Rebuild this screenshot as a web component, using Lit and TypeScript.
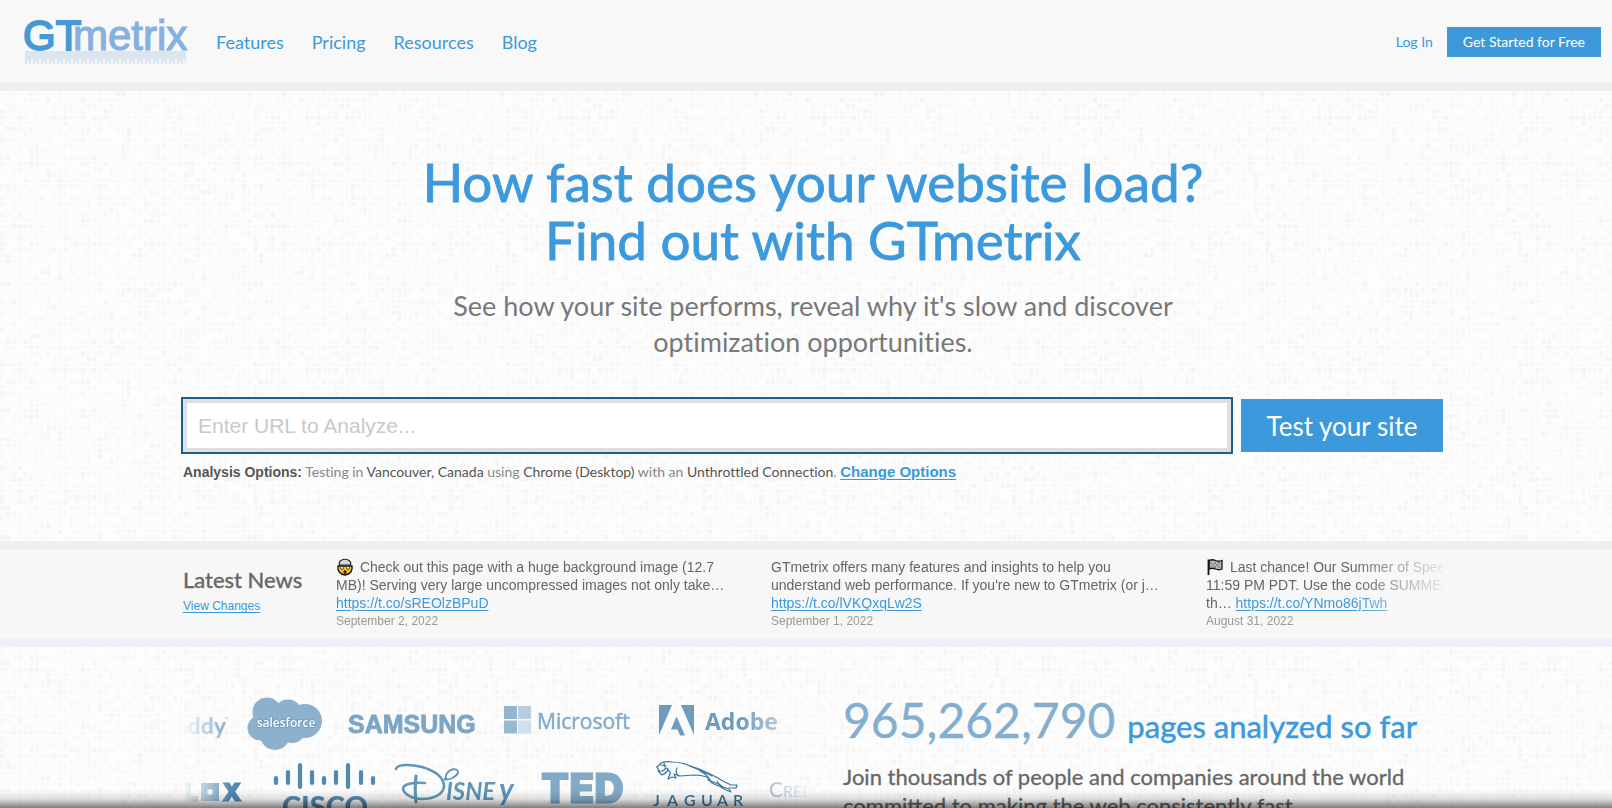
import { LitElement, html, svg, css } from "lit";
import { customElement } from "lit/decorators.js";

const CELLS = 44;
const PITCH = 5.75;

/** Mosaic tiles, one path per shade of grey. */
function mosaicPaths(): string[] {
  let seed = 20220902;
  const next = () => {
    seed = (seed * 1103515245 + 12345) & 0x7fffffff;
    return seed / 0x7fffffff;
  };
  const paths = ["", "", "", ""];
  for (let r = 0; r < CELLS; r++) {
    for (let c = 0; c < CELLS; c++) {
      const n = next();
      const shade = n < 0.08 ? 0 : n < 0.34 ? 1 : n < 0.72 ? 2 : 3;
      paths[shade] += `M${c * PITCH} ${r * PITCH}h4.75v4.75h-4.75z`;
    }
  }
  return paths;
}

const MOSAIC = mosaicPaths();
const SHADES = ["#f5f5f5", "#f8f8f8", "#fafafa", "#fcfcfc"];

@customElement("mosaic-backdrop")
class MosaicBackdrop extends LitElement {
  static styles = css`
    :host { display: block; }
    svg { display: block; width: 100%; height: 100%; }
  `;
  render() {
    const size = CELLS * PITCH;
    return html`<svg aria-hidden="true">
      <defs>
        <pattern id="tiles" width=${size} height=${size} patternUnits="userSpaceOnUse">
          <rect width=${size} height=${size} fill="#fff"></rect>
          ${MOSAIC.map((d, i) => svg`<path d=${d} fill=${SHADES[i]}></path>`)}
        </pattern>
      </defs>
      <rect width="100%" height="100%" fill="url(#tiles)"></rect>
    </svg>`;
  }
}

@customElement("site-header")
class SiteHeader extends LitElement {
  static styles = css`
    :host {
      display: flex;
      align-items: center;
      height: 83px;
      padding: 0 11px 0 25px;
      background: #f8f8f8;
      border-bottom: 8px solid #eee;
      font-family: Lato, sans-serif;
    }
    a { color: #3c99dc; text-decoration: none; }
    svg { display: block; overflow: visible; }
    nav { display: flex; gap: 28px; margin-left: 30px; font-size: 18px; }
    .account { display: flex; align-items: center; gap: 14px; margin-left: auto; font-size: 14px; }
    .cta { padding: 0 16px; line-height: 30px; background: #3c99dc; color: #fff; }
    .logo-text { font: 42px "Liberation Sans", Arial, sans-serif; }
  `;
  render() {
    const ticks = Array.from({ length: 20 }, (_, i) =>
      svg`<path d="M${i * 8 + 7} 45v-5.500M${i * 8 + 3} 45v-3.500" stroke="#f8f8f8" stroke-width="1.800"></path>`);
    return html`
      <a href="#" aria-label="GTmetrix">
        <svg width="161" height="46" viewBox="0 0 161 46">
          <rect y="32" width="161" height="13" fill="#dbe5f0"></rect>
          ${ticks}
          <text class="logo-text" x="48" y="31" fill="#86b0df" stroke="#86b0df" stroke-width="1.200">metrix</text>
          <text class="logo-text" x="-2" y="31" fill="#4799d6" stroke="#4799d6" stroke-width="1.800">GT</text>
        </svg>
      </a>
      <nav>
        <a href="#">Features</a><a href="#">Pricing</a><a href="#">Resources</a><a href="#">Blog</a>
      </nav>
      <div class="account">
        <a href="#">Log In</a>
        <a class="cta" href="#">Get Started for Free</a>
      </div>`;
  }
}

@customElement("hero-section")
class HeroSection extends LitElement {
  static styles = css`
    :host { display: block; padding: 62px 169px 57px 183px; font-family: Lato, sans-serif; font-variant-ligatures: none; text-align: center; }
    h1 { margin: 0; font-size: 53px; line-height: 58px; font-weight: 400; color: #3c99dc; -webkit-text-stroke: 0.8px #3c99dc; }
    .lead { max-width: 760px; margin: 19px auto 0; font-size: 27px; line-height: 36px; color: #787878; }
    form { display: grid; grid-template-columns: minmax(0, 1fr) auto; gap: 10px; margin-top: 39px; }
    input {
      box-sizing: border-box;
      height: 53px;
      padding: 0 11px;
      border: 4px solid #dfdfdf;
      border-radius: 0;
      outline: 2px solid #1f5f8e;
      background: #fff;
      font: 21px "Liberation Sans", Arial, sans-serif;
      color: #555;
    }
    input::placeholder { color: #c9c9c9; opacity: 1; }
    button { width: 202px; border: 0; padding: 0; background: #3c99dc; color: #fff; font: 26px Lato, sans-serif; }
    .options { margin: 8px 0 0; text-align: left; font-size: 14px; line-height: 24px; color: #888; }
    .options span { color: #555; }
    .options strong, .options a { font-family: "Liberation Sans", Arial, sans-serif; font-weight: 700; }
    .options strong { color: #555; }
    .options a { font-size: 15px; color: #3c99dc; text-decoration: underline; text-underline-offset: 2px; }
  `;
  render() {
    return html`
      <h1>How fast does your website load?<br />Find out with GTmetrix</h1>
      <p class="lead">See how your site performs, reveal why it's slow and discover optimization opportunities.</p>
      <form @submit=${(e: Event) => e.preventDefault()}>
        <input type="text" aria-label="URL to analyze" placeholder="Enter URL to Analyze..." />
        <button type="submit">Test your site</button>
      </form>
      <p class="options">
        <strong>Analysis Options:</strong> Testing in <span>Vancouver, Canada</span> using
        <span>Chrome (Desktop)</span> with an <span>Unthrottled Connection</span>.
        <a href="#">Change Options</a>
      </p>`;
  }
}

const explodingHead = html`<svg class="emoji" width="18" height="18" viewBox="0 0 18 18" role="img" aria-label="exploding head">
  <path d="M2 8h14v3q-1 5-7 6q-6-1-7-6z" fill="#fcc21b" stroke="#111" stroke-width="1.300"></path>
  <path d="M3.500 7q-1-3 1.500-4.500q4-2.500 8 0q2.500 1.500 1.500 4.500z" fill="#d5d9dc" stroke="#222" stroke-width="1.200"></path>
  <path d="M3 7h12l-3 2l-3-1l-3 1z" fill="#5a3a18"></path>
  <circle cx="6" cy="9.800" r="1.500" fill="#fff" stroke="#222" stroke-width=".8"></circle>
  <circle cx="12" cy="9.800" r="1.500" fill="#fff" stroke="#222" stroke-width=".8"></circle>
  <ellipse cx="9" cy="14" rx="1.600" ry="2" fill="#3a2418"></ellipse>
</svg>`;

const raceFlag = html`<svg class="emoji" width="18" height="18" viewBox="0 0 18 18" role="img" aria-label="chequered flag">
  <path d="M3 2.500q3.500-1.500 6.500 0t6.500 0v8.500q-3 1.500-6.500 0t-6.500 0z" fill="#bbb" stroke="#111" stroke-width="1.300"></path>
  <path d="M4 4h2v2h-2zM8 4h2v2h-2zM12 4h2v2h-2zM6 6h2v2h-2zM10 6h2v2h-2zM4 8h2v2h-2zM8 8h2v2h-2zM12 8h2v2h-2z" fill="#888"></path>
  <path d="M2.500 1.500v15.500" stroke="#111" stroke-width="1.800"></path>
</svg>`;

@customElement("news-strip")
class NewsStrip extends LitElement {
  static styles = css`
    :host {
      display: grid;
      grid-template-columns: 153px minmax(0, 1fr);
      padding: 0 169px 0 183px;
      background: #f7f7f7;
      border: 8px solid #edf1f5;
      border-width: 8px 0;
      font-family: "Liberation Sans", Arial, sans-serif;
    }
    h2 { margin: 18px 0 4px; font: 22px/26px Lato, sans-serif; color: #666; -webkit-text-stroke: 0.4px #666; }
    a { color: #3c99dc; text-decoration: underline; text-underline-offset: 2px; }
    .changes { display: block; font-size: 12px; line-height: 18px; }
    ul {
      display: flex;
      gap: 35px;
      margin: 0;
      padding: 9px 0;
      list-style: none;
      overflow: hidden;
      -webkit-mask-image: linear-gradient(to right, #000 calc(100% - 90px), rgba(0, 0, 0, 0.1));
      mask-image: linear-gradient(to right, #000 calc(100% - 90px), rgba(0, 0, 0, 0.1));
    }
    li { flex: 0 0 400px; font-size: 14px; line-height: 18px; color: #666; white-space: nowrap; }
    .line { display: block; height: 18px; }
    .emoji { vertical-align: -4px; margin-right: 2px; }
    time { display: block; font-size: 12px; color: #999; }
  `;
  render() {
    return html`
      <div>
        <h2>Latest News</h2>
        <a class="changes" href="#">View Changes</a>
      </div>
      <ul>
        <li>
          <span class="line">${explodingHead} Check out this page with a huge background image (12.7</span>
          <span class="line">MB)! Serving very large uncompressed images not only take…</span>
          <span class="line"><a href="#">https://t.co/sREOlzBPuD</a></span>
          <time>September 2, 2022</time>
        </li>
        <li>
          <span class="line">GTmetrix offers many features and insights to help you</span>
          <span class="line">understand web performance. If you're new to GTmetrix (or j…</span>
          <span class="line"><a href="#">https://t.co/lVKQxqLw2S</a></span>
          <time>September 1, 2022</time>
        </li>
        <li>
          <span class="line">${raceFlag} Last chance! Our Summer of Speed</span>
          <span class="line">11:59 PM PDT. Use the code SUMMER</span>
          <span class="line">th… <a href="#">https://t.co/YNmo86jTwh</a></span>
          <time>August 31, 2022</time>
        </li>
      </ul>`;
  }
}

@customElement("brand-wall")
class BrandWall extends LitElement {
  static styles = css`
    :host {
      display: grid;
      align-content: start;
      gap: 10px;
      padding-top: 6px;
      overflow: hidden;
      -webkit-mask-image: linear-gradient(to right, transparent, #000 48px, #000 calc(100% - 75px), transparent);
      mask-image: linear-gradient(to right, transparent, #000 48px, #000 calc(100% - 75px), transparent);
    }
    .row { display: flex; gap: 24px; }
    svg { flex: none; display: block; overflow: visible; }
    .godaddy { font: 900 23px Lato, sans-serif; }
    .tiny { font: 5px Lato, sans-serif; }
    .salesforce { font: 600 12px "Open Sans", sans-serif; }
    .samsung { font: 700 25px "Liberation Sans", sans-serif; }
    .microsoft { font: 21px "Open Sans", sans-serif; }
    .adobe { font: 700 23px "Open Sans", sans-serif; }
    .roblox { font: 900 25px Inter, sans-serif; }
    .cisco { font: 900 29px Lato, sans-serif; }
    .disney { font: italic 700 24px Lato, sans-serif; }
    .disney-y { font: italic 700 30px Lato, sans-serif; }
    .ted { font: 900 41px Inter, sans-serif; }
    .jaguar { font: 600 16px Lato, sans-serif; }
    .credit { font: 21px Lato, sans-serif; }
    .credit-small { font-size: 16px; }
  `;
  render() {
    const bars = [[276, 776, 784], [288, 770, 784], [300, 763, 788], [312, 770, 784], [324, 776, 784], [336, 770, 784], [348, 763, 788], [361, 770, 784], [373, 776, 784]];
    return html`
      <div class="row">
        <svg width="41" height="54" viewBox="0 0 41 54">
          <text class="godaddy" x="43" y="37" text-anchor="end" fill="#7ba8c8">addy</text>
          <text class="tiny" x="42" y="24" fill="#7ba8c8">™</text>
        </svg>
        <svg width="75" height="54" viewBox="0 0 75 54">
          <g fill="#8db1cc">
            <circle cx="19" cy="15" r="14.500"></circle><circle cx="40" cy="17" r="14.500"></circle>
            <circle cx="57" cy="24" r="17"></circle><circle cx="12" cy="31" r="12.500"></circle>
            <circle cx="27" cy="38" r="15"></circle><circle cx="44" cy="32" r="14"></circle>
          </g>
          <text class="salesforce" x="38" y="30" text-anchor="middle" fill="#fff" stroke="#6d99ba" stroke-width="1.500" paint-order="stroke">salesforce</text>
        </svg>
        <svg width="133" height="54" viewBox="0 0 133 54">
          <text class="samsung" x="1" y="36" fill="#7ba6c5" stroke="#7ba6c5" stroke-width=".8">SAMSUNG</text>
        </svg>
        <svg width="131" height="54" viewBox="0 0 131 54">
          <path d="M0 9h13v13h-13z" fill="#94b5cc"></path><path d="M14 9h13v13h-13z" fill="#b9cedd"></path>
          <path d="M0 23.500h13v13h-13z" fill="#97b9d0"></path><path d="M14 23.500h13v13h-13z" fill="#d0dfea"></path>
          <text class="microsoft" x="33" y="32" fill="#84abc8" stroke="#84abc8" stroke-width=".5">Microsoft</text>
        </svg>
        <svg width="120" height="54" viewBox="0 0 120 54">
          <path d="M0 8h13l-13 30zM22 8h13v30zM17.500 19.500l8.500 19h-5l-2.500-6h-6.500z" fill="#6c9bbd"></path>
          <text class="adobe" x="46" y="33" fill="#6c9bbd">Adobe</text>
        </svg>
      </div>
      <div class="row">
        <svg width="64" height="60" viewBox="0 0 64 60">
          <text class="roblox" x="1" y="40" fill="#5189b0" stroke="#5189b0">L</text>
          <path d="M18 22h18v18h-18zM24.500 28.500v5h5v-5z" fill="#6797ba" fill-rule="evenodd"></path>
          <text class="roblox" x="39" y="40" fill="#5189b0" stroke="#5189b0">X</text>
        </svg>
        <svg width="100" height="60" viewBox="271 761 100 60">
          ${bars.map(([x, a, b]) => svg`<path d="M${x} ${a + 2}V${b - 1}" stroke="#5389b1" stroke-width="4.200" stroke-linecap="round"></path>`)}
          <text class="cisco" x="325" y="817" text-anchor="middle" fill="#5389b1">CISCO</text>
        </svg>
        <svg width="123" height="60" viewBox="395 761 123 60">
          <g fill="none" stroke="#5f96ba" stroke-linecap="round">
            <path d="M396 769c1-5 14-5 26-2c15 4 22 12 22 19c0 9-12 13-22 13c-10 0-18-5-19-10c0-5 10-7 22-6" stroke-width="2.600"></path>
            <path d="M416 776q-1.500 12 0 26" stroke-width="3.200"></path>
            <path d="M444 779c4 2 12-2 14-6c1-4-5-5-9-2c-4 4-4 7-2 8z" stroke-width="1.800"></path>
          </g>
          <text class="disney" x="446" y="800" fill="#5f96ba">ISNE</text>
          <text class="disney-y" x="499" y="800" fill="#5f96ba">y</text>
        </svg>
        <svg width="84" height="60" viewBox="542 761 84 60">
          <text class="ted" x="541" y="803" fill="#82a9c5" stroke="#82a9c5">TED</text>
        </svg>
        <svg width="96" height="60" viewBox="650 761 96 60">
          <g fill="none" stroke="#39759f" stroke-width="1.200" stroke-linejoin="round" stroke-linecap="round">
            <path d="M657 767l4-4q5-2 11-1q10 0 18 4q14 4 26 11q8 5 15 8l6 0l-1 3l-7 0"></path>
            <path d="M657 767l2 4l4 0l3-3l2 1q-1 4-6 6l-4-4M661 765l5 1M664 763l1 4"></path>
            <path d="M668 770q4 3 1 6l-1 3l4-2l4 1l-2-4l6 2l14-1q7 0 13 2q4 7 12 9l7 4l5 2l-2-3l-6-2q-5-3-6-6"></path>
            <path d="M677 768q-2 3 1 8M700 771q8 4 12 12M708 780q6 2 12 5M690 766q12 5 22 10"></path>
          </g>
          <text class="jaguar" x="653 667 684 701 717 733" y="806" fill="#39759f">JAGUAR</text>
        </svg>
        <svg width="80" height="60" viewBox="770 761 80 60">
          <text class="credit" x="769" y="797" fill="#6c9bbd">C<tspan class="credit-small">REDIT</tspan></text>
        </svg>
      </div>`;
  }
}

@customElement("stats-section")
class StatsSection extends LitElement {
  static styles = css`
    :host {
      display: grid;
      grid-template-columns: minmax(0, 1fr) 600px;
      gap: 28px;
      padding: 44px 169px 40px 183px;
      font-family: Lato, sans-serif;
    }
    .count { display: flex; align-items: baseline; gap: 12px; margin: 0; font-size: 31px; line-height: 32px; font-weight: 400; color: #3c99dc; -webkit-text-stroke: 0.5px #3c99dc; }
    .number { font-size: 48px; line-height: 58px; color: #82aecf; -webkit-text-stroke: 0.3px #82aecf; }
    p { margin: 13px 0 0; font-size: 22px; line-height: 29px; color: #666; -webkit-text-stroke: 0.3px #666; }
  `;
  render() {
    return html`
      <brand-wall></brand-wall>
      <div>
        <h2 class="count"><span class="number">965,262,790</span><span>pages analyzed so far</span></h2>
        <p>Join thousands of people and companies around the world committed to making the web consistently fast.</p>
      </div>`;
  }
}

@customElement("app-root")
class AppRoot extends LitElement {
  static styles = css`
    :host { display: block; position: relative; height: 100vh; overflow: hidden; background: #fff; }
    mosaic-backdrop { position: absolute; inset: 0; }
    main, site-header { position: relative; }
    .edge {
      position: absolute;
      inset: auto 0 0 0;
      height: 18px;
      pointer-events: none;
      background: linear-gradient(rgba(0, 0, 0, 0), rgba(0, 0, 0, 0.12) 50%, rgba(0, 0, 0, 0.5));
    }
  `;
  render() {
    return html`
      <mosaic-backdrop></mosaic-backdrop>
      <site-header></site-header>
      <main>
        <hero-section></hero-section>
        <news-strip></news-strip>
        <stats-section></stats-section>
      </main>
      <div class="edge"></div>`;
  }
}
